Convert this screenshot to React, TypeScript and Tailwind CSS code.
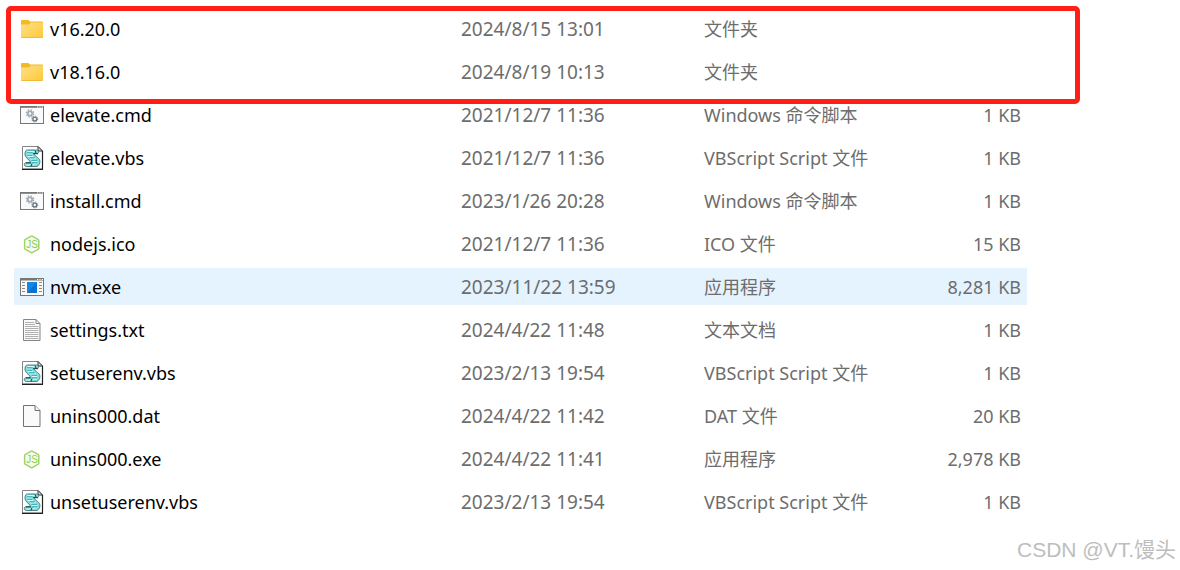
import type { ReactNode } from 'react';

const Svg = ({ children }: { children: ReactNode }) => (
  <svg viewBox="0 0 24 25" width="24" height="25" className="shrink-0" aria-hidden="true">
    {children}
  </svg>
);

const FolderIcon = () => (
  <Svg>
    <defs>
      <linearGradient id="folder" x1="0" y1="0" x2="1" y2="1">
        <stop offset="0" stopColor="#ffe08a" />
        <stop offset="1" stopColor="#fdc937" />
      </linearGradient>
    </defs>
    <path d="M1 5a1 1 0 0 1 1-1h6.5l1.500 1.500H22a1 1 0 0 1 1 1v6H1z" fill="#f5b921" />
    <path d="M1 8.500h8l2-2h12v14.500a1 1 0 0 1-1 1H2a1 1 0 0 1-1-1z" fill="url(#folder)" />
    <path d="M1.5 21.5h21" stroke="#f0bb3c" />
  </Svg>
);

const CmdIcon = () => (
  <Svg>
    <rect x="0.5" y="4.5" width="23" height="17" fill="#fafafa" stroke="#777" />
    <path d="M0 4h24v1.800H0z" fill="#777" />
    <path d="M17 5h1.2M19.4 5h1.2M21.8 5H23" stroke="#fff" />
    <circle cx="10" cy="11.500" r="2.200" fill="none" stroke="#a4adb5" strokeWidth="1.800" />
    <circle cx="10" cy="11.500" r="3.600" fill="none" stroke="#a4adb5" strokeWidth="1.400" strokeDasharray="1.5 1.33" />
    <circle cx="14.800" cy="17" r="1.900" fill="none" stroke="#6b7680" strokeWidth="1.400" />
    <circle cx="14.800" cy="17" r="2.900" fill="none" stroke="#6b7680" strokeWidth="1" strokeDasharray="1.2 1.08" />
  </Svg>
);

const VbsIcon = () => (
  <Svg>
    <path d="M2.5 1.5H18l4.5 4.5v18h-20z" fill="#fff" stroke="#858585" />
    <path d="M18 1.5V6h4.5z" fill="#ddd" stroke="#333" />
    <path d="M22.5 6v18M2 24.3h21" stroke="#222" strokeWidth="1.2" />
    {/* Rolled script */}
    <path
      d="M7.500 5h9c2 0 2.700 2 1.300 3.500h-3c-1 1 .2 2 1.500 3 2.800 2.200 4.400 3.600 3.300 6.900-.7 2-2 3.100-3.600 3.100H6.500c-2.500 0-3-3-1-3.800h4.200c.8-1.300-.4-2.300-1.700-3.500C5.800 12.300 4.800 10.800 5 8.300 5.200 6.300 6 5 7.500 5z"
      fill="#7fdede"
      stroke="#3d7477"
      strokeWidth="0.900"
    />
    <path d="M7.500 6.500h7M7 9h5M8 11.500h5M10 14h6M12 16.500h5M11.500 19h5M6.500 20h4" stroke="#e6ffff" strokeWidth="0.900" />
    <path d="M7 7.800h5.500M7.500 10.300h4.500M9.500 12.800h5M11.500 15.300h5.500M12 17.800h5" stroke="#2ba3a8" strokeWidth="0.900" />
    <path d="M13 8.700h5M6 17.900h5M15 5.500l1 2.500M12 18.500l-1 2.800" stroke="#173f43" />
  </Svg>
);

const NodeIcon = () => (
  <Svg>
    <path
      d="M11.200 5.200a1 1 0 0 1 1 0l6.100 3.500a1 1 0 0 1 .5.900v7.600a1 1 0 0 1-.5.900l-6.100 3.500a1 1 0 0 1-1 0l-6.100-3.500a1 1 0 0 1-.5-.900V9.600a1 1 0 0 1 .5-.9z"
      fill="#f8fdf2"
      stroke="#a0d468"
      strokeWidth="1.500"
    />
    <text x="12" y="17" textAnchor="middle" fontSize="10" fill="#8ccb50" fontFamily="Liberation Sans, sans-serif">
      JS
    </text>
  </Svg>
);

const ExeIcon = () => (
  <Svg>
    <rect x="0.500" y="4.500" width="23" height="17" fill="#fafafa" stroke="#777" />
    <path d="M0 4h24v2.500H0z" fill="#777" />
    <path d="M17 5.500h1.200M19.400 5.500h1.200M21.800 5.500H23" stroke="#fff" />
    <path d="M2 8.500h3M2 11.500h3M2 14.500h3M2 17.500h3M19 8.500h3M19 11.500h3M19 14.500h3M19 17.500h3" stroke="#8a8a8a" />
    <rect x="7" y="8" width="10" height="11" fill="#0a73cf" />
    <path d="M7 8h10L7 19z" fill="#1487e2" />
  </Svg>
);

const TxtIcon = () => (
  <Svg>
    <path d="M3.500 2.500H16l4 4v17H3.500z" fill="#fafafa" stroke="#858585" />
    <path d="M16 2.500v4h4" fill="none" stroke="#858585" />
    <path d="M5 5.500h9M5 7.500h10M5 9.500h13.500M5 11.500h13.500M5 13.500h13.500M5 15.500h13.500M5 17.500h13.500M5 19.500h13.500M5 21.500h13.500" stroke="#b0b0b0" />
  </Svg>
);

const DatIcon = () => (
  <Svg>
    <path d="M3.500 2.500H15l5 5v16H3.500z" fill="#fafafa" stroke="#737373" />
    <path d="M15 2.500v5h5" fill="#eee" stroke="#737373" />
  </Svg>
);

const files = [
  { icon: <FolderIcon />, name: 'v16.20.0', date: '2024/8/15 13:01', type: '文件夹', size: '' },
  { icon: <FolderIcon />, name: 'v18.16.0', date: '2024/8/19 10:13', type: '文件夹', size: '' },
  { icon: <CmdIcon />, name: 'elevate.cmd', date: '2021/12/7 11:36', type: 'Windows 命令脚本', size: '1 KB' },
  { icon: <VbsIcon />, name: 'elevate.vbs', date: '2021/12/7 11:36', type: 'VBScript Script 文件', size: '1 KB' },
  { icon: <CmdIcon />, name: 'install.cmd', date: '2023/1/26 20:28', type: 'Windows 命令脚本', size: '1 KB' },
  { icon: <NodeIcon />, name: 'nodejs.ico', date: '2021/12/7 11:36', type: 'ICO 文件', size: '15 KB' },
  { icon: <ExeIcon />, name: 'nvm.exe', date: '2023/11/22 13:59', type: '应用程序', size: '8,281 KB', active: true },
  { icon: <TxtIcon />, name: 'settings.txt', date: '2024/4/22 11:48', type: '文本文档', size: '1 KB' },
  { icon: <VbsIcon />, name: 'setuserenv.vbs', date: '2023/2/13 19:54', type: 'VBScript Script 文件', size: '1 KB' },
  { icon: <DatIcon />, name: 'unins000.dat', date: '2024/4/22 11:42', type: 'DAT 文件', size: '20 KB' },
  { icon: <NodeIcon />, name: 'unins000.exe', date: '2024/4/22 11:41', type: '应用程序', size: '2,978 KB' },
  { icon: <VbsIcon />, name: 'unsetuserenv.vbs', date: '2023/2/13 19:54', type: 'VBScript Script 文件', size: '1 KB' },
];

const App = () => {
  return (
    <main className="relative bg-white pt-1 text-[#6d6d6d] font-['Noto_Sans','Noto_Sans_CJK_SC',sans-serif]">
      <div className="pl-[14px] pr-[153px]">
        <table className="w-full table-fixed border-separate border-spacing-x-0 border-spacing-y-[6px] text-lg leading-6">
          <colgroup>
            <col />
            <col className="w-[243px]" />
            <col className="w-[200px]" />
            <col className="w-[123px]" />
          </colgroup>
          <tbody>
            {files.map((file) => (
              <tr key={file.name} className={file.active ? 'h-[37px] bg-[#e5f3ff]' : 'h-[37px]'}>
                <th scope="row" className="rounded-l-xs p-0 pl-[6px] text-left font-normal text-black">
                  <div className="flex items-center gap-[6px]">
                    {file.icon}
                    {file.name}
                  </div>
                </th>
                <td className="p-0 text-[19px]">{file.date}</td>
                <td className="p-0">{file.type}</td>
                <td className="p-0 pr-[6px] text-right">{file.size}</td>
              </tr>
            ))}
          </tbody>
        </table>
      </div>

      {/* Highlight around the installed versions */}
      <div className="pointer-events-none absolute top-[6px] right-[100px] left-[6px] h-[98px] rounded-[5px] border-5 border-[#ff1f14]" />

      <footer className="px-1 pt-3 pb-2 text-right text-[21px] leading-6 text-[#bdbdbd] font-['Liberation_Sans','Noto_Sans_CJK_SC',sans-serif]">
        CSDN @VT.馒头
      </footer>
    </main>
  );
};

export default App;
